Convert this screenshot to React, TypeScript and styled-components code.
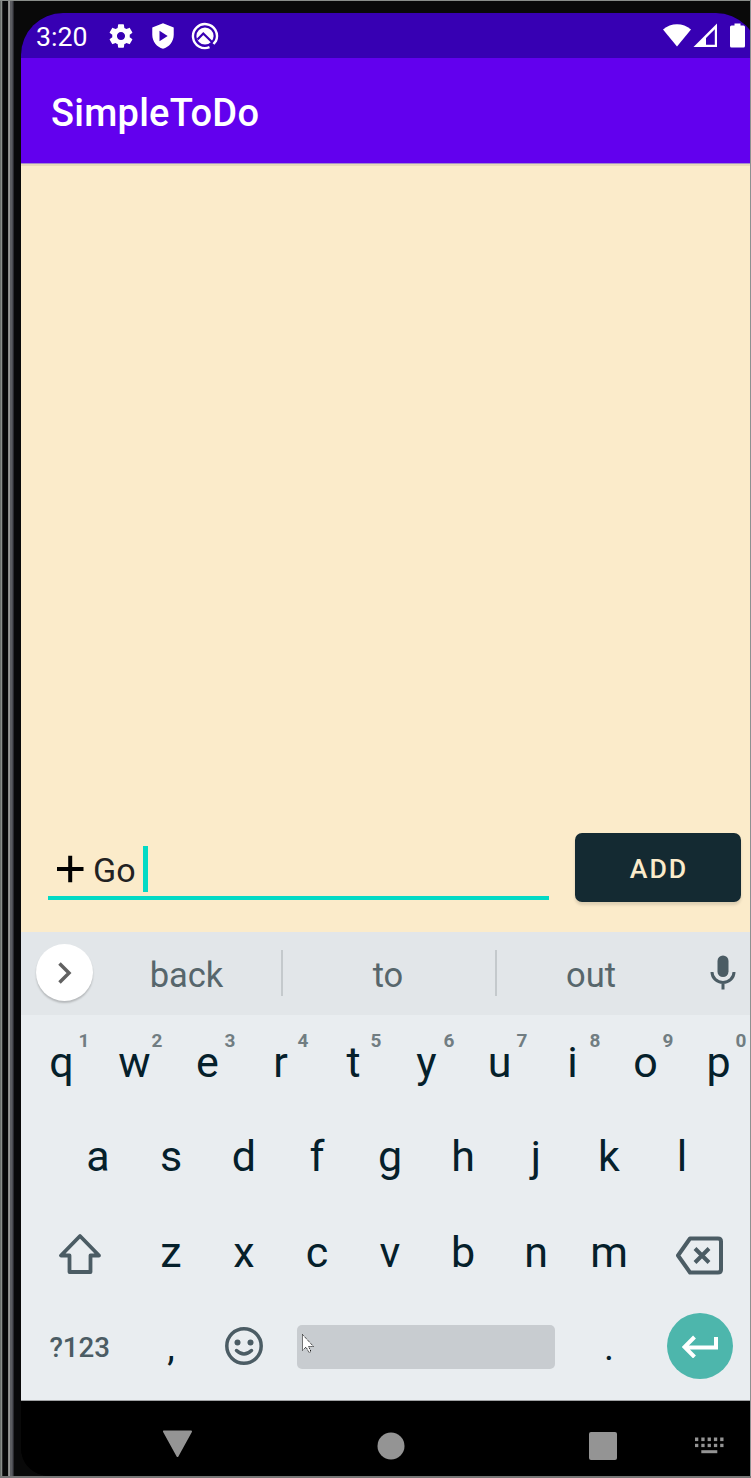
import React from "react";
import styled, { createGlobalStyle } from "styled-components";

const GlobalStyle = createGlobalStyle`
  * { box-sizing: border-box; }
  html, body { margin: 0; padding: 0; background: #0a0a0a; }
  body { font-family: Roboto, "Liberation Sans", sans-serif; overflow: hidden; }
`;

const Device = styled.div`
  width: 751px;
  height: 1478px;
  display: grid;
  grid-template-columns: 21px 729px 1px;
  background: #090909;
  overflow: hidden;
  position: relative;
  border-top: 1px solid #8a8e8a;
`;

const Bezel = styled.div`
  background: linear-gradient(
    to right,
    #6c706c 0 1px, #8a8e8a 1px 2px, #2c2c2c 2px 3px, #080808 3px 8px,
    #8a8a88 8px 9px, #989896 9px 10px, #5c5d61 10px 12px, #4b4c52 12px 13px,
    #2c2c30 13px 14px, #090909 14px 21px
  );
`;

const RightEdge = styled.div`
  background: #8d9190;
`;

const BottomEdge = styled.div`
  position: absolute;
  left: 0;
  right: 0;
  bottom: 0;
  height: 2px;
  background: #777;
`;

const Viewport = styled.div`
  overflow: hidden;
`;

const Screen = styled.div`
  margin-top: 12px;
  width: 737px;
  height: 1463px;
  display: flex;
  flex-direction: column;
  overflow: hidden;
  border-radius: 42px 42px 0 28px;
  background: #000;
`;

const StatusBar = styled.div`
  height: 45px;
  flex: none;
  background: #3700b3;
  display: flex;
  align-items: center;
  padding: 1px 13px 0 15px;
  color: #fff;
`;

const Clock = styled.span`
  font-size: 26.7px;
  line-height: 32px;
  width: 71px;
  padding-top: 2px;
`;

const StatusIcons = styled.div`
  display: flex;
  align-items: center;
  gap: 14px;
  flex: 1;
`;

const SignalIcons = styled.div`
  display: flex;
  align-items: center;
`;

const AppBar = styled.div`
  height: 106px;
  flex: none;
  background: #6200ee;
  border-bottom: 1px solid #a58acb;
  color: #fff;
  display: flex;
  align-items: center;
  padding: 5px 0 0 30px;
  font-size: 38px;
  font-weight: 500;
  letter-spacing: 0.25px;
`;

const Content = styled.main`
  width: 729px;
  height: 768px;
  flex: none;
  background: #fbebca;
  border-top: 2px solid #e9d9ba;
  display: flex;
  align-items: flex-end;
  padding: 0 9px 30px 27px;
  justify-content: space-between;
`;

const Field = styled.div`
  width: 501px;
  height: 57px;
  margin-bottom: 2px;
  border-bottom: 4px solid #03dac5;
  display: flex;
  align-items: flex-start;
  padding: 3px 0 0 9px;
`;

const FieldText = styled.span`
  font-size: 34px;
  line-height: 44px;
  margin: 2px 0 0 9px;
  color: #222;
  width: 50px;
`;

const Caret = styled.span`
  width: 4.500px;
  height: 46px;
  background: #03dac5;
`;

const AddButton = styled.button`
  width: 166px;
  height: 69px;
  border: 0;
  border-radius: 7px;
  background: #142a32;
  color: #fbebca;
  font: 500 26.7px/32px Roboto, sans-serif;
  letter-spacing: 2px;
  padding: 2px 0 0 2px;
  box-shadow: 0 3px 3px rgba(0, 0, 0, 0.12);
`;

const Suggestions = styled.div`
  height: 83px;
  flex: none;
  background: #e2e6e9;
  display: flex;
  align-items: center;
  padding: 0 0 2px 15px;
  color: #57666c;
`;

const Expand = styled.div`
  width: 57px;
  height: 57px;
  border-radius: 50%;
  background: #fff;
  display: grid;
  place-items: center;
  box-shadow: 0 2px 2px rgba(0, 0, 0, 0.2);
`;

const Word = styled.div<{ $w: number; $shift?: number }>`
  width: ${(p) => p.$w}px;
  text-align: center;
  font-size: 34.5px;
  line-height: 44px;
  padding: 4px ${(p) => p.$shift ?? 0}px 0 0;
`;

const Divider = styled.div`
  width: 2px;
  height: 46px;
  background: #c4c9cc;
`;

const MicSlot = styled.div`
  display: flex;
  margin-left: 25px;
`;

const Keyboard = styled.div`
  height: 386px;
  flex: none;
  background: #e9edf0;
  padding-left: 4px;
  border-bottom: 1px solid #a0a2a4;
`;

const KeyRow = styled.div<{ $indent?: boolean }>`
  display: flex;
  height: 95px;
  padding-left: ${(p) => (p.$indent ? 36.5 : 0)}px;
`;

const Key = styled.div<{ $units?: number; $size?: number; $top?: number; $bottom?: number }>`
  width: ${(p) => (p.$units ?? 1) * 73}px;
  flex: none;
  position: relative;
  display: flex;
  align-items: center;
  justify-content: center;
  padding: ${(p) => p.$top ?? 0}px 0 ${(p) => p.$bottom ?? 2}px;
  font-size: ${(p) => p.$size ?? 43}px;
  color: #05202b;
`;

const Hint = styled.span`
  position: absolute;
  left: 53.5px;
  top: 14px;
  font-size: 19px;
  line-height: 24px;
  font-weight: 700;
  color: #717d82;
`;

const SymbolsLabel = styled.span`
  font-size: 27.7px;
  font-weight: 500;
  color: #4b5c64;
`;

const SpaceBar = styled.div`
  width: 258px;
  height: 44px;
  border-radius: 5px;
  background: #c8ccd0;
  margin-right: 1px;
`;

const Enter = styled.div`
  width: 66px;
  height: 66px;
  border-radius: 50%;
  background: #4db6ac;
  display: grid;
  place-items: center;
`;

const NavBar = styled.div`
  flex: 1;
  background: #000;
  display: flex;
  align-items: center;
  padding: 14px 26px 0 141px;
`;

const NavItem = styled.div<{ $gap: number; $lift?: number }>`
  margin-right: ${(p) => p.$gap}px;
  padding-bottom: ${(p) => p.$lift ?? 0}px;
  display: flex;
`;

const Pointer = styled.svg`
  position: absolute;
  left: 301px;
  top: 1332px;
`;

const ICON = "#4b5c64";

const TOP = "qwertyuiop".split("");
const HOME = "asdfghjkl".split("");
const BOTTOM = "zxcvbnm".split("");

export default function App() {
  return (
    <>
      <GlobalStyle />
      <Device>
        <Bezel />
        <Viewport>
          <Screen>
            <StatusBar>
              <Clock>3:20</Clock>
              <StatusIcons>
                <svg width="28" height="28" viewBox="0 0 24 24" fill="#fff">
                  <path d="M19.43 12.98c.04-.32.07-.64.07-.98s-.03-.66-.07-.98l2.11-1.65c.19-.15.24-.42.12-.64l-2-3.46c-.12-.22-.39-.3-.61-.22l-2.49 1c-.52-.4-1.08-.73-1.69-.98l-.38-2.65C14.46 2.18 14.25 2 14 2h-4c-.25 0-.46.18-.49.42l-.38 2.65c-.61.25-1.17.59-1.69.98l-2.49-1c-.23-.09-.49 0-.61.22l-2 3.46c-.13.22-.07.49.12.64l2.11 1.65c-.04.32-.07.65-.07.98s.03.66.07.98l-2.11 1.65c-.19.15-.24.42-.12.64l2 3.46c.12.22.39.3.61.22l2.49-1c.52.4 1.08.73 1.69.98l.38 2.65c.03.24.24.42.49.42h4c.25 0 .46-.18.49-.42l.38-2.65c.61-.25 1.17-.59 1.69-.98l2.49 1c.23.09.49 0 .61-.22l2-3.46c.12-.22.07-.49-.12-.64l-2.11-1.65zM12 15.5c-1.93 0-3.5-1.57-3.5-3.5s1.57-3.5 3.5-3.5 3.5 1.57 3.5 3.5-1.57 3.5-3.5 3.5z" />
                </svg>
                <svg width="28" height="28" viewBox="0 0 24 24" fill="#fff" fillRule="evenodd">
                  <path d="M12 1 2.800 4.800v6.200c0 5.550 3.900 10.740 9.200 12 5.300-1.260 9.200-6.450 9.200-12V4.800zM9 7.500v9l7-4.500z" />
                </svg>
                <svg width="28" height="28" viewBox="0 0 28 28" fill="none">
                  <circle cx="14" cy="14" r="8.600" fill="#fff" />
                  <path d="M6.500 17.500 12.300 11.500 23.500 22.500" stroke="#3700b3" strokeWidth="2.200" />
                  <path d="M18.500 25.200A12 12 0 1 1 25 18.800L22.500 22" stroke="#fff" strokeWidth="2.400" />
                </svg>
              </StatusIcons>
              <SignalIcons>
                <svg width="82" height="28" viewBox="0 0 82 28" fill="#fff">
                  <path d="M0 7.500C8 .400 20 .400 28 7.500L14 24.500z" />
                  <path fillRule="evenodd" d="M30.500 25 54 1.500V25zM43 22.800h8.800V7.200L43 16z" />
                  <path d="M71.500 1.500h6v2h3a1.500 1.500 0 0 1 1.500 1.500V24a1.500 1.500 0 0 1-1.500 1.500h-12A1.500 1.500 0 0 1 67 24V5a1.500 1.500 0 0 1 1.500-1.500h3z" />
                </svg>
              </SignalIcons>
            </StatusBar>
            <AppBar>SimpleToDo</AppBar>
            <Content>
              <Field>
                <svg width="27" height="42" viewBox="0 0 27 42">
                  <path d="M0 23h26.500M13.200 9.700v26.600" stroke="#000" strokeWidth="4" />
                </svg>
                <FieldText>Go</FieldText>
                <Caret />
              </Field>
              <AddButton>ADD</AddButton>
            </Content>
            <Suggestions>
              <Expand>
                <svg width="14" height="22" viewBox="0 0 14 22" fill="none" stroke="#616161" strokeWidth="3.500">
                  <path d="M1.500 1.500 11 11l-9.500 9.500" />
                </svg>
              </Expand>
              <Word $w={188} $shift={1}>back</Word>
              <Divider />
              <Word $w={212} $shift={2}>to</Word>
              <Divider />
              <Word $w={188}>out</Word>
              <MicSlot>
                <svg width="26" height="36" viewBox="0 0 26 36">
                  <rect x="7.500" y="0.500" width="11" height="21.500" rx="5.500" fill={ICON} />
                  <path d="M2 17a11 10.500 0 0 0 22 0M13 27.500V34.500" stroke={ICON} strokeWidth="3" fill="none" />
                </svg>
              </MicSlot>
            </Suggestions>
            <Keyboard>
              <KeyRow>
                {TOP.map((k, i) => (
                  <Key key={k}>
                    {k}
                    <Hint>{(i + 1) % 10}</Hint>
                  </Key>
                ))}
              </KeyRow>
              <KeyRow $indent>
                {HOME.map((k) => (
                  <Key key={k} $bottom={3}>{k}</Key>
                ))}
              </KeyRow>
              <KeyRow>
                <Key $units={1.5} $top={4}>
                  <svg width="44" height="42" viewBox="0 0 44 42" fill="none" stroke={ICON} strokeWidth="3.800" strokeLinejoin="round">
                    <path d="M22 3 3 22.500h8.500V39h21V22.500H41z" />
                  </svg>
                </Key>
                {BOTTOM.map((k) => (
                  <Key key={k}>{k}</Key>
                ))}
                <Key $units={1.5} $top={7}>
                  <svg width="50" height="40" viewBox="0 0 50 40" fill="none" stroke={ICON} strokeWidth="4" strokeLinejoin="round">
                    <path d="M15 3.500h28q3 0 3 3v28q0 3-3 3H15L3 20.500z" />
                    <path d="m20 13.500 14 14m0-14-14 14" />
                  </svg>
                </Key>
              </KeyRow>
              <KeyRow>
                <Key $units={1.5} $top={2}>
                  <SymbolsLabel>?123</SymbolsLabel>
                </Key>
                <Key $size={38}>,</Key>
                <Key $bottom={3}>
                  <svg width="40" height="40" viewBox="0 0 40 40" fill="none" stroke={ICON} strokeWidth="3.500">
                    <circle cx="20" cy="20" r="17.200" />
                    <circle cx="13.500" cy="16.500" r="3" fill={ICON} stroke="none" />
                    <circle cx="26.500" cy="16.500" r="3" fill={ICON} stroke="none" />
                    <path d="M12.500 24.500q7.500 7 15 0" strokeLinecap="round" />
                  </svg>
                </Key>
                <Key $units={4}>
                  <SpaceBar />
                </Key>
                <Key $size={38}>.</Key>
                <Key $units={1.5} $bottom={3.5}>
                  <Enter>
                    <svg width="36" height="24" viewBox="0 0 36 24" fill="none" stroke="#fff" strokeWidth="4">
                      <path d="M34 3v10.500H3M12.500 3 2.500 13l10 10" />
                    </svg>
                  </Enter>
                </Key>
              </KeyRow>
            </Keyboard>
            <NavBar>
              <NavItem $gap={183.5} $lift={4}>
                <svg width="31" height="28" viewBox="0 0 31 28">
                  <path d="M2 1.500h27L15.500 26z" fill="#949494" stroke="#949494" strokeWidth="2" strokeLinejoin="round" />
                </svg>
              </NavItem>
              <NavItem $gap={184.5}>
                <svg width="28" height="28" viewBox="0 0 28 28">
                  <circle cx="14" cy="14" r="13.500" fill="#949494" />
                </svg>
              </NavItem>
              <NavItem $gap={78}>
                <svg width="28" height="28" viewBox="0 0 28 28">
                  <rect width="28" height="28" rx="2" fill="#949494" />
                </svg>
              </NavItem>
              <svg width="29" height="17" viewBox="0 0 29 17" fill="#949494">
                {[0, 6.3, 12.6, 18.9, 25.2].map((x) => (
                  <React.Fragment key={x}>
                    <rect x={x} y="0.500" width="3.300" height="3.600" />
                    <rect x={x} y="6.800" width="3.300" height="3.300" />
                  </React.Fragment>
                ))}
                <rect x="6.300" y="13.200" width="16" height="3" />
              </svg>
            </NavBar>
          </Screen>
        </Viewport>
        <RightEdge />
        <BottomEdge />
        <Pointer width="14" height="22" viewBox="0 0 14 22">
          <path d="M1.500 1.500v16l3.500-3.500 3 5.500 2-1-2.500-5h5z" fill="#fff" stroke="#000" strokeWidth="1" strokeDasharray="1 1" />
        </Pointer>
      </Device>
    </>
  );
}
